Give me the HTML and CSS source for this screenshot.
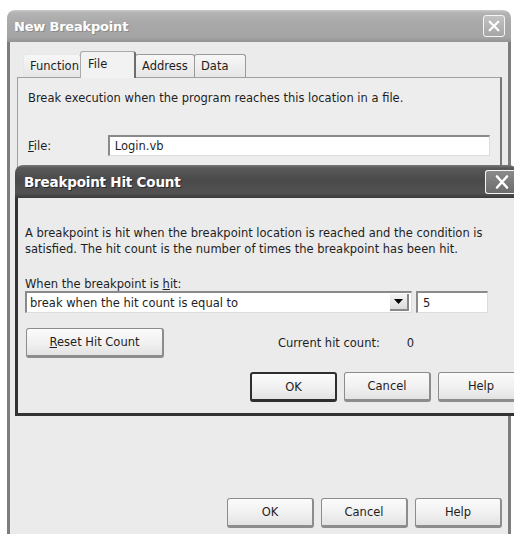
FILE: index.html
```html
<!DOCTYPE html>
<html>
<head>
<meta charset="utf-8">
<title>New Breakpoint</title>
<link rel="stylesheet" href="styles.css">
</head>
<body>
<div class="window main">
  <div class="titlebar">
    <span class="title">New Breakpoint</span>
    <span class="close">
      <svg viewBox="0 0 21 21" width="21" height="21"><path d="M6 6 L15 15 M15 6 L6 15" stroke="#fff" stroke-width="2.4" stroke-linecap="round"/></svg>
    </span>
  </div>
  <div class="frame">
    <div class="tabs">
      <div class="tab tab-function">Function</div>
      <div class="tab tab-file active">File</div>
      <div class="tab tab-address">Address</div>
      <div class="tab tab-data">Data</div>
    </div>
    <div class="panel">
      <p class="lead">Break execution when the program reaches this location in a file.</p>
      <div class="field">
        <label class="label"><u>F</u>ile:</label>
        <div class="input wide">Login.vb</div>
      </div>
    </div>
    <div class="actions">
      <button class="btn">OK</button>
      <button class="btn">Cancel</button>
      <button class="btn">Help</button>
    </div>
  </div>
</div>

<div class="window popup">
  <div class="titlebar">
    <span class="title">Breakpoint Hit Count</span>
    <span class="close">
      <svg viewBox="0 0 24 24" width="24" height="24"><path d="M7 6.5 L17 17.5 M17 6.5 L7 17.5" stroke="#fff" stroke-width="2.6" stroke-linecap="round"/></svg>
    </span>
  </div>
  <div class="frame">
    <p class="desc">A breakpoint is hit when the breakpoint location is reached and the condition is satisfied. The hit count is the number of times the breakpoint has been hit.</p>
    <div class="when">When the breakpoint is <u>h</u>it:</div>
    <div class="combo-row">
      <div class="combo">
        <span class="combo-text">break when the hit count is equal to</span>
        <span class="drop">
          <svg viewBox="0 0 9 5" width="9" height="5"><path d="M0 0 H9 L4.5 5 Z" fill="#000"/></svg>
        </span>
      </div>
      <div class="input count">5</div>
    </div>
    <div class="reset-row">
      <button class="btn reset"><u>R</u>eset Hit Count</button>
      <span class="current">Current hit count:</span>
      <span class="current-val">0</span>
    </div>
    <div class="actions inner">
      <button class="btn default">OK</button>
      <button class="btn">Cancel</button>
      <button class="btn">Help</button>
    </div>
  </div>
</div>
</body>
</html>
```
FILE: styles.css
```css
html, body {
  margin: 0;
  padding: 0;
  background: #fff;
  width: 514px;
  height: 534px;
  overflow: hidden;
}

body {
  position: relative;
  font-family: "DejaVu Sans", sans-serif;
  font-size: 11.5px;
  color: #1e1e1e;
}

u { text-decoration: underline; text-underline-offset: 1px; }

/* ---------- window chrome ---------- */
.window {
  display: flex;
  flex-direction: column;
  border-radius: 8px 8px 0 0;
  overflow: hidden;
}

.main {
  margin: 10px 0 0 7px;
  width: 504px;
  height: 540px;
}

.titlebar {
  display: flex;
  align-items: center;
  justify-content: space-between;
  flex: none;
}

.main .titlebar {
  height: 32px;
  padding: 0 6px 0 7px;
  background: linear-gradient(#c9c9c9 0, #b3b3b3 3px, #a9a9a9 40%, #a4a4a4 85%, #939393 100%);
}

.title {
  color: #fff;
  font-family: "DejaVu Sans", sans-serif;
  font-weight: bold;
  letter-spacing: -0.2px;
}

.main .title {
  font-size: 13px;
  text-shadow: 1px 1px 0 #8a8a8a;
}

.close {
  display: flex;
  align-items: center;
  justify-content: center;
  border: 1px solid #f4f4f4;
  border-radius: 3px;
}

.main .close {
  width: 20px;
  height: 20px;
  background: linear-gradient(#c2c2c2, #a6a6a6);
}

.main .close svg { width: 20px; height: 20px; }

.frame {
  flex: 1;
  background: #ebebeb;
  border-left: 3px solid #7d7d7d;
  border-right: 3px solid #7d7d7d;
  display: flex;
  flex-direction: column;
}

/* ---------- tabs ---------- */
.tabs {
  display: flex;
  align-items: flex-end;
  margin: 8px 0 0 13px;
  height: 27px;
}

.tab {
  height: 23px;
  padding: 0 0 0 6px;
  box-sizing: border-box;
  display: flex;
  align-items: center;
  background: linear-gradient(#f7f7f7, #e6e6e6);
  border: 1px solid #9a9a9a;
  border-bottom: none;
  border-radius: 3px 3px 0 0;
  margin-right: -1px;
}

.tab-function { width: 58px; border-left-color: #e8e8e8; border-top-color: #e8e8e8; }
.tab-file { width: 56px; }
.tab-address { width: 60px; }
.tab-data { width: 52px; }

.tab.active {
  height: 27px;
  align-items: flex-start;
  padding: 5px 0 0 7px;
  background: #f2f2f2;
  border-color: #aaa;
  border-right: 2px solid #6d6d6d;
  position: relative;
  z-index: 1;
  margin-bottom: -1px;
}

.panel {
  margin: 0 6px 0 7px;
  height: 330px;
  border: 1px solid #a0a0a0;
  border-right: 2px solid #777;
  background: #ededed;
  padding: 0 10px;
}

.lead {
  margin: 13px 0 0 0;
}

.field {
  display: flex;
  align-items: center;
  margin-top: 30px;
}

.label {
  width: 80px;
}

.input {
  background: #fff;
  border-top: 2px solid #8a8a8a;
  border-left: 2px solid #8a8a8a;
  border-right: 1px solid #dcdcdc;
  border-bottom: 1px solid #dcdcdc;
  box-sizing: border-box;
  display: flex;
  align-items: center;
  padding-left: 5px;
}

.input.wide {
  width: 383px;
  height: 21px;
}

/* ---------- buttons ---------- */
.actions {
  display: flex;
  justify-content: flex-end;
  gap: 7px;
  padding-right: 6px;
  margin-top: 89px;
}

.btn {
  flex: none;
  width: 87px;
  height: 30px;
  font-family: "DejaVu Sans", sans-serif;
  font-size: 11.5px;
  color: #1e1e1e;
  background: linear-gradient(#fbfbfb, #efefef 60%, #e2e2e2);
  border: 1px solid #8c8c8c;
  border-right: 2px solid #8c8c8c;
  border-bottom: 3px solid #8c8c8c;
  border-radius: 3px;
  padding: 0;
}

.btn.default {
  border: 2px solid #2e2e2e;
  border-bottom-width: 3px;
}

/* ---------- hit count dialog ---------- */
.popup {
  position: absolute;
  left: 15px;
  top: 165px;
  width: 502px;
  height: 251px;
}

.popup .titlebar {
  height: 33px;
  padding: 0 0 0 9px;
  background: linear-gradient(#7a7a7a 0, #595959 3px, #4a4a4a 45%, #525252 85%, #3a3a3a 100%);
}

.popup .title {
  font-size: 13.5px;
  text-shadow: 1px 1px 0 #2a2a2a;
}

.popup .close {
  width: 31px;
  height: 22px;
  background: linear-gradient(#8a8a8a, #6c6c6c);
  border-right: none;
  border-radius: 3px 0 0 3px;
}

.popup .frame {
  border-right: none;
  border-left: 3px solid #333;
  border-bottom: 3px solid #333;
  padding-left: 7px;
  overflow: hidden;
}

.desc {
  margin: 27px 0 0 0;
  line-height: 16px;
  width: 470px;
}

.when {
  margin-top: 20px;
}

.combo-row {
  display: flex;
  gap: 4px;
  margin-top: 0;
}

.combo {
  width: 387px;
  height: 22px;
  box-sizing: border-box;
  background: #fff;
  border-top: 2px solid #8a8a8a;
  border-left: 2px solid #8a8a8a;
  border-right: 1px solid #dcdcdc;
  border-bottom: 1px solid #dcdcdc;
  display: flex;
  align-items: center;
  justify-content: space-between;
}

.combo-text {
  padding-left: 3px;
}

.drop {
  width: 19px;
  height: 17px;
  margin-right: 2px;
  display: flex;
  align-items: center;
  justify-content: center;
  background: linear-gradient(#f4f4f4, #dcdcdc);
  border-right: 2px solid #888;
  border-bottom: 2px solid #888;
  box-sizing: border-box;
}

.input.count {
  width: 72px;
  height: 22px;
}

.reset-row {
  display: flex;
  align-items: center;
  margin-top: 14px;
  height: 31px;
}

.btn.reset {
  width: 138px;
  margin-left: 1px;
}

.current {
  margin-left: 114px;
}

.current-val {
  margin-left: 27px;
}

.actions.inner {
  margin-top: 14px;
  justify-content: flex-start;
  padding-left: 225px;
  gap: 7px;
}
```
